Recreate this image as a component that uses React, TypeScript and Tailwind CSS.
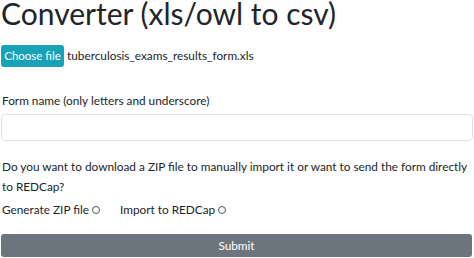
import React from "react";

export default function App() {
  return (
    <div className="w-[474px] h-[258px] overflow-hidden bg-white text-[#212529] font-['Lato',sans-serif]">
      <h1 className="pl-[1px] pt-[1px] text-[30px] leading-[34px] font-normal -mt-[5px]">
        Converter (xls/owl to csv)
      </h1>
      <div className="mt-[15px] flex items-center pl-[1px] h-[22px]">
        <button className="h-[22px] w-[63px] rounded-[3px] bg-[#17a2b8] text-white text-[11.5px] leading-none">
          Choose file
        </button>
        <span className="ml-[3px] text-[11.8px] leading-none">tuberculosis_exams_results_form.xls</span>
      </div>
      <div className="mt-[24px] pl-[2px] text-[11.8px] leading-[19px]">Form name (only letters and underscore)</div>
      <div className="mt-[4px] mx-[1px] h-[27px] rounded-[4px] border border-[#dee2e6] bg-white"></div>
      <div className="mt-[16px] pl-[2px] pr-[6px] text-[11.8px] leading-[20px]">
        Do you want to download a ZIP file to manually import it or want to send the form directly to REDCap?
      </div>
      <div className="mt-[3px] pl-[2px] flex items-center text-[11.8px] leading-[20px]">
        <span>Generate ZIP file</span>
        <span className="ml-[3px] inline-block w-[8px] h-[8px] rounded-full border border-[#555]"></span>
        <span className="ml-[20px]">Import to REDCap</span>
        <span className="ml-[3px] inline-block w-[8px] h-[8px] rounded-full border border-[#555]"></span>
      </div>
      <button className="mt-[14px] ml-[1px] w-[471px] h-[23px] rounded-[3px] bg-[#6c757d] text-white text-[11.8px] leading-none">
        Submit
      </button>
    </div>
  );
}
